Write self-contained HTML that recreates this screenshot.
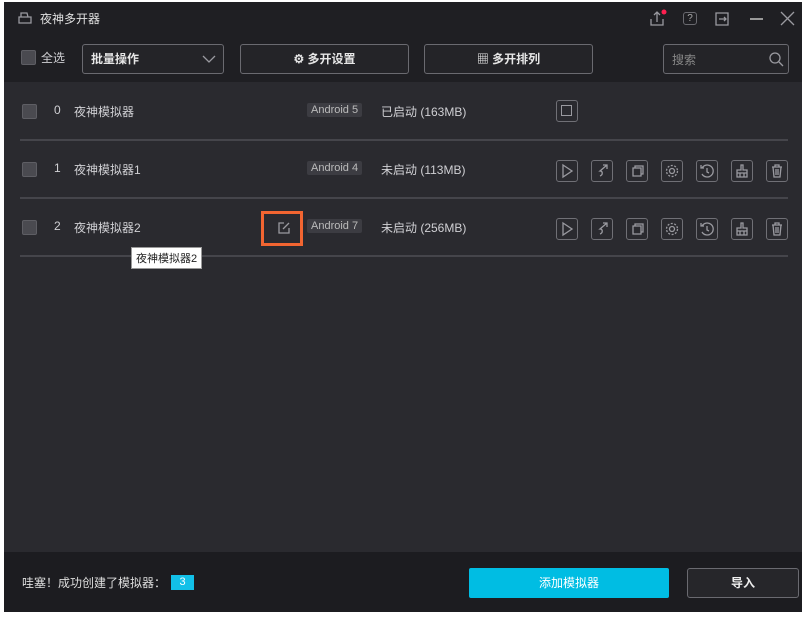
<!DOCTYPE html>
<html><head><meta charset="utf-8"><style>
*{margin:0;padding:0;box-sizing:border-box}
body{width:806px;height:620px;background:#fff;font-family:"Liberation Sans","Noto Sans CJK SC",sans-serif;color:#d0d0d4;font-size:12px;position:relative;overflow:hidden}
.win{position:absolute;left:4px;top:2px;width:798px;height:610px;background:#2a2a2f}
.top{position:absolute;left:0;top:0;width:798px;height:80px;background:#1f1f23}
.bot{position:absolute;left:0;top:550px;width:798px;height:60px;background:#1c1c20}
.a{position:absolute}
.box{border:1px solid #6a6a70;border-radius:3px}
.cb{width:15px;height:15px;background:#4a4a50;border:1px solid #5e5e64;border-radius:2px}
.tag{background:#3c3c42;color:#bbb;font-size:11px;padding:1px 4px;border-radius:2px}
.sep{position:absolute;left:16px;width:768px;height:2px;background:#45454b}
.ib{position:absolute;width:22px;height:22px;border:1.5px solid #707076;border-radius:3px}
svg{stroke:#9a9aa0;fill:none;stroke-width:1.3}
</style></head><body>
<div class="win">
<div class="top"></div>
<div class="bot"></div>
<svg class="a" style="left:13px;top:9px" width="16" height="14"><path d="M2 6h12v6H2zM4 6V2h6l1 4"/></svg>
<div class="a" style="left:36px;top:8px;font-size:12px;color:#e0e0e0">夜神多开器</div>
<svg class="a" style="left:645px;top:7px" width="18" height="18"><path d="M2 10v6h12v-6M8 13V3M5 6l3-3 3 3"/><circle cx="15" cy="3" r="2.5" fill="#ff2050" stroke="none"/></svg>
<div class="a box" style="left:679px;top:10px;width:14px;height:13px;font-size:10px;text-align:center;line-height:11px;color:#aaa">?</div>
<svg class="a" style="left:710px;top:9px" width="16" height="16"><path d="M2 2h12v12H2zM5 8h7M10 6l2 2-2 2"/></svg>
<div class="a" style="left:746px;top:16px;width:13px;height:1.5px;background:#999"></div>
<svg class="a" style="left:776px;top:9px" width="15" height="15"><path d="M1 1l13 13M14 1L1 14"/></svg>
<div class="a cb" style="left:17px;top:48px"></div>
<div class="a" style="left:37px;top:47px">全选</div>
<div class="a box" style="left:78px;top:42px;width:142px;height:30px;background:#242428"></div>
<div class="a" style="left:87px;top:48px;color:#e6e6e6;font-weight:bold">批量操作</div>
<svg class="a" style="left:198px;top:52px" width="14" height="10"><path d="M1 2l6 6 6-6"/></svg>
<div class="a box" style="left:236px;top:42px;width:169px;height:30px;background:#242428;text-align:center;line-height:28px;color:#e6e6e6;font-weight:bold">⚙ 多开设置</div>
<div class="a box" style="left:420px;top:42px;width:169px;height:30px;background:#242428;text-align:center;line-height:28px;color:#e6e6e6;font-weight:bold">▦ 多开排列</div>
<div class="a box" style="left:659px;top:42px;width:126px;height:30px;background:#242428"></div>
<div class="a" style="left:668px;top:49px;color:#888">搜索</div>
<svg class="a" style="left:764px;top:49px" width="16" height="16"><circle cx="7" cy="7" r="5"/><path d="M11 11l4 4"/></svg>

<div class="a cb" style="left:18px;top:102px"></div>
<div class="a" style="left:50px;top:101px">0</div><div class="a" style="left:70px;top:101px">夜神模拟器</div>
<div class="a tag" style="left:303px;top:101px">Android 5</div>
<div class="a" style="left:377px;top:101px">已启动 (163MB)</div>
<div class="ib" style="left:552px;top:98px"><div style="position:absolute;left:4px;top:4px;width:11px;height:11px;border:1.5px solid #9a9aa0"></div></div>
<div class="sep" style="top:137px"></div>

<div class="a cb" style="left:18px;top:160px"></div>
<div class="a" style="left:50px;top:159px">1</div><div class="a" style="left:70px;top:159px">夜神模拟器1</div>
<div class="a tag" style="left:303px;top:159px">Android 4</div>
<div class="a" style="left:377px;top:159px">未启动 (113MB)</div>
<div class="sep" style="top:195px"></div>

<div class="a cb" style="left:18px;top:218px"></div>
<div class="a" style="left:50px;top:217px">2</div><div class="a" style="left:70px;top:217px">夜神模拟器2</div>
<div class="a" style="left:257px;top:209px;width:42px;height:35px;border:3px solid #f26531"></div>
<svg class="a" style="left:273px;top:219px" width="14" height="14"><path d="M7 2H2v10h10V7M6 8l6-6"/></svg>
<div class="a tag" style="left:303px;top:217px">Android 7</div>
<div class="a" style="left:377px;top:217px">未启动 (256MB)</div>
<div class="sep" style="top:253px"></div>
<div class="a" style="left:127px;top:245px;background:#fff;color:#222;font-size:11px;padding:2px 4px;border:1px solid #999">夜神模拟器2</div>

<div id="icons"></div>
<div class="a" style="left:18px;top:572px;color:#ddd">哇塞！成功创建了模拟器：</div>
<div class="a" style="left:167px;top:573px;width:23px;height:15px;background:#12c0e8;color:#fff;text-align:center;font-size:11px;line-height:15px">3</div>
<div class="a" style="left:465px;top:566px;width:200px;height:30px;background:#00bde3;border-radius:2px;color:#fff;text-align:center;line-height:30px">添加模拟器</div>
<div class="a box" style="left:683px;top:566px;width:112px;height:30px;background:#26262a;color:#eee;text-align:center;line-height:28px;font-weight:bold">导入</div>
</div>
<script>
var h='';[158,216].forEach(function(t){
var paths=['<path d="M7 5l9 6-9 6z"/>','<path d="M12 5h4v4M16 5l-7 6c3 0 3 4 0 5"/>','<path d="M7 8h8v8H7zM9 8V6h8v8h-2"/>','<circle cx="11" cy="11" r="2.5"/><circle cx="11" cy="11" r="5.5" stroke-dasharray="2 1.5"/>','<path d="M6 8a6 6 0 1 1 0 6M11 8v4l2 1M5 5v3h3"/>','<path d="M10 5h2v5h4v3H6v-3h4zM6 13v4h10v-4M9 13v4M13 13v4"/>','<path d="M6 7h10M9 7V5h4v2M7 7l1 10h6l1-10M10 9v6M12 9v6"/>'];
for(var i=0;i<7;i++){h+='<div class="ib" style="left:'+(552+i*35)+'px;top:'+t+'px"><svg width="22" height="22" style="position:absolute;left:-1.5px;top:-1.5px">'+paths[i]+'</svg></div>';}});
document.getElementById('icons').outerHTML=h;
</script>
</body></html>
